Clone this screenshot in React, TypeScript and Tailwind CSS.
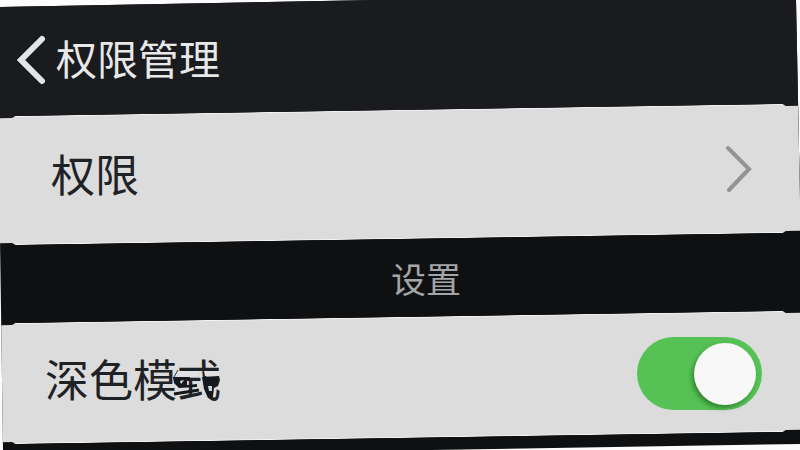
import { useState, type ReactNode } from "react";

function Card({ children }: { children: ReactNode }) {
  return (
    <div className="grid grid-cols-1">
      {/* slanted panel behind the row, with small notches in its corners */}
      <div className="col-start-1 row-start-1 -skew-y-[0.9deg] border-y border-[#f4f4f4] bg-[#dcdcdd] [clip-path:polygon(0_2px,12px_2px,16px_0,calc(100%-18px)_0,calc(100%-14px)_2px,100%_2px,100%_calc(100%-2px),calc(100%-14px)_calc(100%-2px),calc(100%-18px)_100%,16px_100%,12px_calc(100%-2px),0_calc(100%-2px))]" />
      <div className="relative col-start-1 row-start-1">{children}</div>
    </div>
  );
}

function Smudge() {
  return (
    <svg
      viewBox="0 0 48 32"
      className="pointer-events-none absolute right-0 bottom-2 h-8 w-12"
      aria-hidden="true"
    >
      <path d="M5 1 H24 V6 H3 Z M31 1 H44 L46 6 H32 Z" fill="#dfe1e4" />
      <path d="M5 0 L1 7" stroke="#33383c" strokeWidth="1" />
      <path d="M0 7 H17 V10 H14 V15 L24 14 V17 L6 18 L1 13 Z" fill="#15191d" />
      <path d="M7 11 L11 10 L8 14 Z" fill="#dfe1e4" />
      <path d="M1 24 L26 20" stroke="#15191d" strokeWidth="3" />
      <path d="M29 7 L46 6 L47 10 L45 16 L41 18 L40 26 L38 29 L35 28 L31 19 Z" fill="#15191d" />
      <path d="M35 16 H39 V21 H36 Z" fill="#c4d4df" />
    </svg>
  );
}

export default function App() {
  const [dark, setDark] = useState(true);

  return (
    <div className="min-h-screen bg-[#fcfcfc] font-['Noto_Sans_CJK_SC',sans-serif]">
      <main className="flex min-h-screen flex-col bg-[#0f1012] [clip-path:polygon(0_7px,47%_0,calc(100%-4px)_0,100%_200px,100%_calc(100%-6px),54%_100%,3px_100%,0_240px)]">
        {/* header colour runs on under the slanted edge of the first card */}
        <div className="bg-linear-to-b from-[#1a1b1f] from-50% to-[#0f1012] to-80%">
          <header className="flex h-[110px] items-center pt-2 pl-4">
            <button type="button" className="flex h-16 items-center" aria-label="返回">
              <svg viewBox="0 0 32 52" className="h-[52px] w-8" fill="none" stroke="#e3e6e8" strokeWidth="6">
                <path d="M26 6 L5 27 L26 48" strokeLinecap="round" />
              </svg>
            </button>
            <h1 className="ml-2 pb-1 text-[41px] leading-[60px] text-[#e8e8e9]">权限管理</h1>
          </header>

          <Card>
            <a href="#permissions" className="flex h-[129px] items-center justify-between pr-12 pb-3 pl-[51px]">
              <span className="pt-2 text-[44px] leading-[64px] text-[#1f2225]">权限</span>
              <svg viewBox="0 0 28 48" className="h-12 w-7" fill="none" stroke="#939394" strokeWidth="4" aria-hidden="true">
                <path d="M4 3 L25 24 L5 45" strokeLinecap="round" />
              </svg>
            </a>
          </Card>
        </div>

        <h2 className="flex h-[78px] items-center justify-center pl-[52px] text-[35px] text-[#a4a5a6]">设置</h2>

        <Card>
          <div className="flex h-[121px] items-center justify-between pr-[38px] pb-2 pl-[45px]">
            <label htmlFor="dark-mode" className="relative mt-2 text-[44px] leading-[64px] text-[#1f2225]">
              深色模式
              <Smudge />
            </label>
            <span className="relative flex h-[73px] w-[125px] items-center justify-end rounded-full">
              <input
                id="dark-mode"
                type="checkbox"
                role="switch"
                checked={dark}
                onChange={(e) => setDark(e.target.checked)}
                className="peer absolute inset-0 cursor-pointer appearance-none rounded-full bg-[#b5b5b7] checked:bg-[#56c255]"
              />
              <span className="pointer-events-none relative mr-auto ml-[6px] size-[62px] rounded-full bg-[#f8f8f8] shadow-[-2px_3px_5px_rgba(0,60,0,0.45)] peer-checked:mr-[6px] peer-checked:ml-auto" />
            </span>
          </div>
        </Card>
      </main>
    </div>
  );
}
